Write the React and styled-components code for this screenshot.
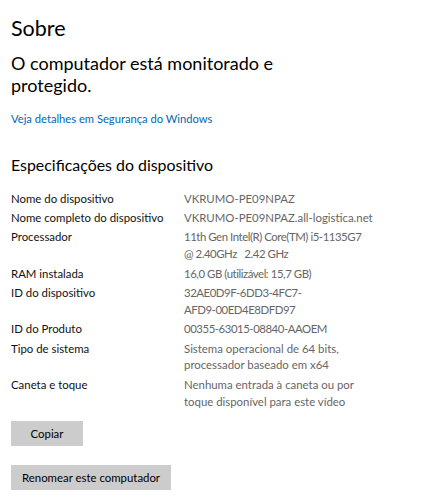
import React from "react";
import styled, { createGlobalStyle } from "styled-components";

const GlobalStyle = createGlobalStyle`
  html, body {
    margin: 0;
    padding: 0;
    background: #ffffff;
  }
  body {
    font-family: Lato, "Liberation Sans", sans-serif;
    color: #000000;
  }
`;

const Page = styled.div`
  width: 444px;
  height: 500px;
  padding: 14px 11px 0 11px;
  box-sizing: border-box;
  overflow: hidden;
`;

const Title = styled.h1`
  margin: 0;
  font-size: 21.5px;
  font-weight: 400;
  line-height: 28px;
`;

const Status = styled.p`
  margin: 10px 0 0 0;
  font-size: 18px;
  line-height: 22px;
  font-weight: 400;
  width: 290px;
`;

const Link = styled.a`
  display: block;
  margin-top: 15px;
  font-size: 11.2px;
  line-height: 16px;
  color: #0067b8;
  text-decoration: none;
  cursor: pointer;
`;

const Heading = styled.h2`
  margin: 27px 0 0 0;
  font-size: 15.9px;
  font-weight: 400;
  line-height: 22px;
`;

const Specs = styled.dl`
  display: grid;
  grid-template-columns: 173px 1fr;
  row-gap: 2.6px;
  margin: 14.6px 0 0 0;
  font-size: 11.4px;
  line-height: 16.8px;
`;

const Label = styled.dt`
  margin: 0;
  color: #111111;
`;

// ids and numbers sit a little tighter than running text
const Value = styled.dd`
  margin: 0;
  color: #666666;
  white-space: pre;
  letter-spacing: ${(p) => (p.$tight ? "-0.45px" : "0")};
`;

const Button = styled.button`
  display: block;
  margin-top: ${(p) => p.$gap}px;
  height: 25px;
  min-width: 72px;
  padding: 0 11px;
  border: none;
  background: #cccccc;
  font-family: inherit;
  font-size: 11.4px;
  color: #000000;
  cursor: pointer;
`;

// each value keeps its own line breaks, like the settings panel shows them
const specs = [
  { label: "Nome do dispositivo", lines: ["VKRUMO-PE09NPAZ"] },
  { label: "Nome completo do dispositivo", lines: ["VKRUMO-PE09NPAZ.all-logistica.net"] },
  { label: "Processador", lines: ["11th Gen Intel(R) Core(TM) i5-1135G7", "@ 2.40GHz   2.42 GHz"], tight: true },
  { label: "RAM instalada", lines: ["16,0 GB (utilizável: 15,7 GB)"], tight: true },
  { label: "ID do dispositivo", lines: ["32AE0D9F-6DD3-4FC7-", "AFD9-00ED4E8DFD97"], tight: true },
  { label: "ID do Produto", lines: ["00355-63015-08840-AAOEM"], tight: true },
  { label: "Tipo de sistema", lines: ["Sistema operacional de 64 bits,", "processador baseado em x64"] },
  { label: "Caneta e toque", lines: ["Nenhuma entrada à caneta ou por", "toque disponível para este vídeo"] },
];

export default function App() {
  return (
    <>
      <GlobalStyle />
      <Page>
        <Title>Sobre</Title>
        <Status>O computador está monitorado e protegido.</Status>
        <Link>Veja detalhes em Segurança do Windows</Link>

        <Heading>Especificações do dispositivo</Heading>
        <Specs>
          {specs.map((s) => (
            <React.Fragment key={s.label}>
              <Label>{s.label}</Label>
              <Value $tight={s.tight}>{s.lines.join("\n")}</Value>
            </React.Fragment>
          ))}
        </Specs>

        <Button $gap={10.7}>Copiar</Button>
        <Button $gap={19}>Renomear este computador</Button>
      </Page>
    </>
  );
}
